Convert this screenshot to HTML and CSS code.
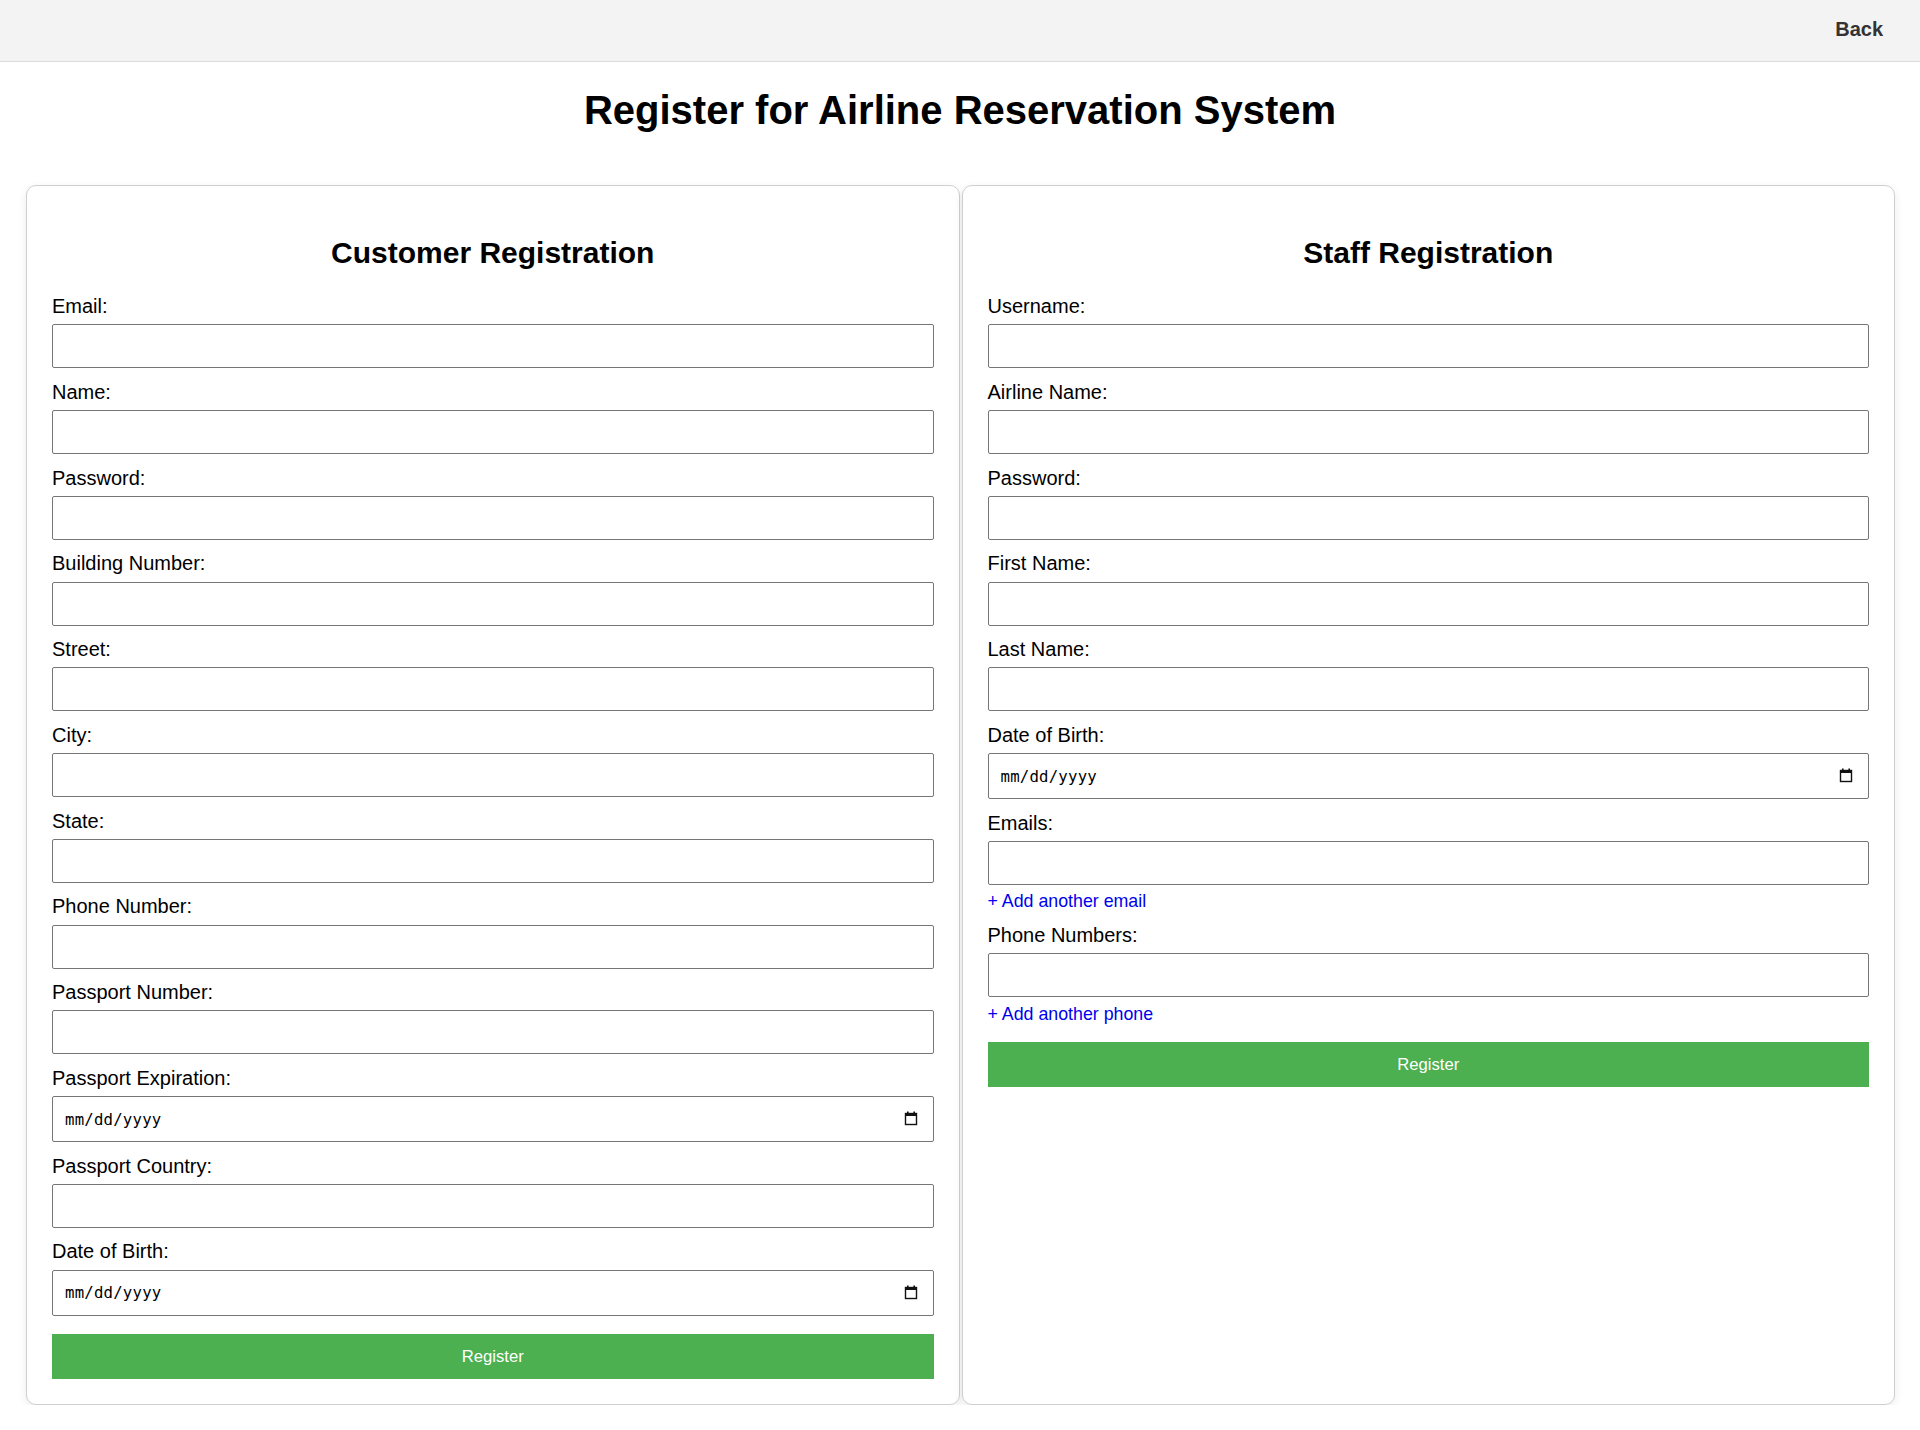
FILE: index.html
```html
<!DOCTYPE html>
<html lang="en">
<head>
<meta charset="utf-8">
<title>Register for Airline Reservation System</title>
<link rel="stylesheet" href="styles.css">
</head>
<body>
<header class="topbar">
  <a class="back-link" href="#">Back</a>
</header>
<h1 class="page-title">Register for Airline Reservation System</h1>
<main class="forms">
  <section class="card">
    <h2 class="card-title">Customer Registration</h2>
    <form class="reg-form">
      <label class="field-label">Email:</label>
      <input class="field-input" type="text">
      <label class="field-label">Name:</label>
      <input class="field-input" type="text">
      <label class="field-label">Password:</label>
      <input class="field-input" type="password">
      <label class="field-label">Building Number:</label>
      <input class="field-input" type="text">
      <label class="field-label">Street:</label>
      <input class="field-input" type="text">
      <label class="field-label">City:</label>
      <input class="field-input" type="text">
      <label class="field-label">State:</label>
      <input class="field-input" type="text">
      <label class="field-label">Phone Number:</label>
      <input class="field-input" type="text">
      <label class="field-label">Passport Number:</label>
      <input class="field-input" type="text">
      <label class="field-label">Passport Expiration:</label>
      <div class="field-input date-input"><span class="date-text">mm/dd/yyyy</span><svg class="cal-icon" width="14" height="15" viewBox="0 0 14 15"><rect x="1.5" y="2.5" width="11" height="11" fill="none" stroke="#111" stroke-width="1.4"/><rect x="1" y="2" width="12" height="3" fill="#111"/><rect x="3" y="0.5" width="1.6" height="2" fill="#111"/><rect x="9.4" y="0.5" width="1.6" height="2" fill="#111"/></svg></div>
      <label class="field-label">Passport Country:</label>
      <input class="field-input" type="text">
      <label class="field-label">Date of Birth:</label>
      <div class="field-input date-input"><span class="date-text">mm/dd/yyyy</span><svg class="cal-icon" width="14" height="15" viewBox="0 0 14 15"><rect x="1.5" y="2.5" width="11" height="11" fill="none" stroke="#111" stroke-width="1.4"/><rect x="1" y="2" width="12" height="3" fill="#111"/><rect x="3" y="0.5" width="1.6" height="2" fill="#111"/><rect x="9.4" y="0.5" width="1.6" height="2" fill="#111"/></svg></div>
      <button class="submit-btn" type="button">Register</button>
    </form>
  </section>
  <section class="card">
    <h2 class="card-title">Staff Registration</h2>
    <form class="reg-form">
      <label class="field-label">Username:</label>
      <input class="field-input" type="text">
      <label class="field-label">Airline Name:</label>
      <input class="field-input" type="text">
      <label class="field-label">Password:</label>
      <input class="field-input" type="password">
      <label class="field-label">First Name:</label>
      <input class="field-input" type="text">
      <label class="field-label">Last Name:</label>
      <input class="field-input" type="text">
      <label class="field-label">Date of Birth:</label>
      <div class="field-input date-input"><span class="date-text">mm/dd/yyyy</span><svg class="cal-icon" width="14" height="15" viewBox="0 0 14 15"><rect x="1.5" y="2.5" width="11" height="11" fill="none" stroke="#111" stroke-width="1.4"/><rect x="1" y="2" width="12" height="3" fill="#111"/><rect x="3" y="0.5" width="1.6" height="2" fill="#111"/><rect x="9.4" y="0.5" width="1.6" height="2" fill="#111"/></svg></div>
      <label class="field-label">Emails:</label>
      <input class="field-input field-input--tight" type="text">
      <a class="add-link" href="#">+ Add another email</a>
      <label class="field-label">Phone Numbers:</label>
      <input class="field-input field-input--tight" type="text">
      <a class="add-link" href="#">+ Add another phone</a>
      <button class="submit-btn" type="button">Register</button>
    </form>
  </section>
</main>
</body>
</html>
```

FILE: styles.css
```css
html, body {
  margin: 0;
  padding: 0;
  background: #fff;
}

body {
  font-family: "Liberation Sans", Arial, sans-serif;
  color: #000;
}

.topbar {
  height: 61px;
  background: #f3f3f3;
  border-bottom: 1px solid #dcdcdc;
  display: flex;
  justify-content: flex-end;
  align-items: center;
  padding-right: 37px;
}

.back-link {
  font-size: 20px;
  font-weight: bold;
  color: #333;
  text-decoration: none;
  line-height: 23px;
  margin-top: -2px;
}

.page-title {
  font-size: 40px;
  line-height: 46px;
  font-weight: bold;
  text-align: center;
  margin: 25px 0 0;
}

.forms {
  display: flex;
  gap: 2px;
  padding: 52px 25px 0 26px;
  align-items: stretch;
}

.card {
  flex: 1 1 0;
  min-width: 0;
  background: #fff;
  border: 1px solid #cfcfcf;
  border-radius: 10px;
  box-shadow: 0 3px 10px rgba(0, 0, 0, 0.08);
  padding: 25px;
}

.card-title {
  font-size: 30px;
  line-height: 34px;
  font-weight: bold;
  text-align: center;
  margin: 25px 0 25px;
}

.reg-form {
  display: flex;
  flex-direction: column;
}

.field-label {
  display: block;
  font-size: 20px;
  line-height: 23px;
  margin-bottom: 6.25px;
}

.field-input {
  display: block;
  box-sizing: border-box;
  width: 100%;
  height: 44px;
  margin: 0 0 12.5px;
  padding: 0 12px;
  border: 1px solid #767676;
  border-radius: 2px;
  background: #fff;
  font-size: 16px;
}

.field-input--tight {
  margin-bottom: 6.5px;
}

.date-input {
  height: 46px;
  display: flex;
  align-items: center;
  justify-content: space-between;
  padding: 0 15px 0 12px;
}

.date-text {
  font-family: "DejaVu Sans Mono", "Liberation Mono", monospace;
  font-size: 15.7px;
  letter-spacing: 0.2px;
  color: #000;
}

.cal-icon {
  display: block;
  margin-top: -1px;
}

.add-link {
  font-size: 17.8px;
  line-height: 20px;
  color: #0000ee;
  text-decoration: none;
  margin-bottom: 12.5px;
  align-self: flex-start;
}

.submit-btn {
  display: block;
  width: 100%;
  height: 45px;
  margin-top: 6px;
  border: none;
  border-radius: 0;
  background: #4caf50;
  color: #fff;
  font-family: "Liberation Sans", Arial, sans-serif;
  font-size: 16.67px;
  cursor: pointer;
}
```
